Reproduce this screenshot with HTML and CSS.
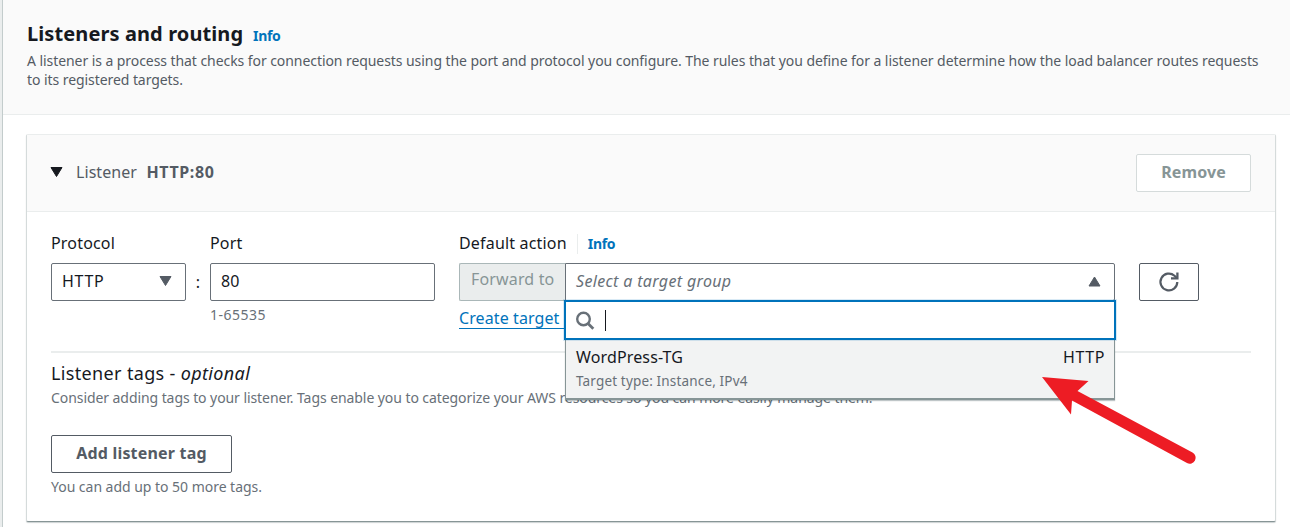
FILE: index.html
```html
<!DOCTYPE html>
<html lang="en">
<head>
<meta charset="utf-8">
<title>Listeners and routing</title>
<link rel="stylesheet" href="styles.css">
</head>
<body>
<main class="panel">
  <header class="panel-header">
    <div class="title-row"><h2 class="title">Listeners and routing</h2><a class="info">Info</a></div>
    <p class="description">A listener is a process that checks for connection requests using the port and protocol you configure. The rules that you define for a listener determine how the load balancer routes requests<br>to its registered targets.</p>
  </header>
  <section class="card">
    <div class="card-header">
      <svg class="caret" width="13" height="10" viewBox="0 0 13 10"><path d="M1 0.5H12L6.5 9.5Z" fill="#16191f" stroke="#16191f" stroke-linejoin="round"/></svg>
      <span class="listener-label">Listener</span>
      <strong class="listener-name">HTTP:80</strong>
      <button class="button remove">Remove</button>
    </div>
    <div class="card-body">
      <div class="fields">
        <div class="field protocol">
          <label class="label">Protocol</label>
          <div class="control"><span class="scheme">HTTP</span><svg width="13" height="10" viewBox="0 0 13 10"><path d="M1 0.5H12L6.5 9.5Z" fill="#545b64" stroke="#545b64" stroke-linejoin="round"/></svg></div>
        </div>
        <span class="colon">:</span>
        <div class="field port">
          <label class="label">Port</label>
          <div class="control"><span>80</span></div>
          <span class="hint">1-65535</span>
        </div>
        <div class="field action">
          <div class="label action-label"><span>Default action</span><a class="info action-info">Info</a></div>
          <div class="action-row">
            <div class="prefix">Forward to</div>
            <div class="target">
              <div class="control target-control"><em class="placeholder">Select a target group</em><svg width="13" height="11" viewBox="0 0 13 11"><path d="M1 10H12L6.5 1Z" fill="#545b64" stroke="#545b64" stroke-linejoin="round"/></svg></div>
              <div class="dropdown">
                <div class="search">
                  <svg width="20" height="20" viewBox="0 0 20 20" fill="none" stroke="#687078" stroke-width="2.4"><circle cx="7.500" cy="8" r="6.300"/><path d="M12 12.500L17.300 17.800" stroke-width="2.800"/></svg>
                  <i class="cursor"></i>
                </div>
                <div class="option">
                  <div class="option-row"><span class="option-name">WordPress-TG</span><span class="option-scheme">HTTP</span></div>
                  <span class="option-sub">Target type: Instance, IPv4</span>
                </div>
              </div>
            </div>
            <button class="button refresh" aria-label="Refresh"><svg width="22" height="22" viewBox="0 0 22 22" fill="none" stroke="#545b64" stroke-width="2.2"><path d="M19.300 11A8.400 8.400 0 1 1 16.500 4.700L18.800 7"/><path d="M19.400 1.500V7.400H13" stroke-width="2.300"/></svg></button>
          </div>
          <a class="create">Create target group</a>
        </div>
      </div>
      <section class="tags">
        <h3 class="tags-title">Listener tags - <em>optional</em></h3>
        <p class="tags-desc">Consider adding tags to your listener. Tags enable you to categorize your AWS resources so you can more easily manage them.</p>
        <button class="button add">Add listener tag</button>
        <p class="tags-note">You can add up to 50 more tags.</p>
      </section>
    </div>
  </section>
</main>
<svg class="arrow" width="160" height="94" viewBox="0 0 160 94"><path d="M3 3L49.5 7L38.500 17L153.500 78.500A5.800 5.800 0 0 1 148 89L33 26.500L32 40.500Z" fill="#ed1c24"/></svg>
</body>
</html>
```
FILE: styles.css
```css
* { box-sizing: border-box; }
body {
  margin: 0;
  width: 1290px;
  height: 527px;
  overflow: hidden;
  position: relative;
  background: #eaeded;
  color: #16191f;
  font: 16px/22px "Noto Sans", "Open Sans", sans-serif;
}
h2, h3, p { margin: 0; font-weight: 400; }
.panel { margin-left: 2px; height: 527px; border-left: 1px solid #c3cccc; background: #fff; }
.panel-header { height: 115px; padding: 21px 0 0 24px; background: #fafafa; border-bottom: 1px solid #eaeded; }
.title-row { display: flex; align-items: baseline; gap: 10px; height: 30px; white-space: nowrap; }
.title { font-size: 20px; line-height: 26px; font-weight: 700; width: 216px; letter-spacing: 0.1px; }
.info { color: #0073bb; font-size: 14px; font-weight: 700; letter-spacing: -0.3px; }
.description { font-size: 14px; line-height: 19px; color: #545b64; white-space: nowrap; letter-spacing: -0.068px; }
.card { margin: 19px 14px 0 23px; height: 388px; border: 1px solid #d5dbdb; border-top-color: #eaeded; border-bottom: 1px solid #879596; border-radius: 2px; background: #fff; box-shadow: 0 1px 1px rgba(0, 28, 36, .2); }
.card-header { display: flex; align-items: center; height: 77px; padding: 0 24px 0 23px; background: #fafafa; border-bottom: 1px solid #eaeded; color: #545b64; }
.caret { margin-bottom: 2px; }
.listener-label { margin-left: 13px; width: 70.5px; padding-bottom: 2px; white-space: nowrap; letter-spacing: 0.06px; }
.listener-name { padding-bottom: 2px; letter-spacing: 0.6px; }
.button { display: flex; align-items: center; justify-content: center; height: 38px; padding: 0; border: 1px solid #545b64; border-radius: 2px; background: #fff; color: #545b64; font: 700 16px/22px "Noto Sans", "Open Sans", sans-serif; white-space: nowrap; }
.remove { margin-left: auto; width: 115px; padding-bottom: 2px; border-color: #d5dbdb; color: #879596; letter-spacing: 0.1px; }
.card-body { padding: 20px 24px 0; }
.fields { display: flex; height: 121px; border-bottom: 2px solid #eaeded; }
.label { display: block; height: 31px; white-space: nowrap; letter-spacing: 0.18px; }
.control { display: flex; align-items: center; justify-content: space-between; height: 38px; padding: 0 13px 2px 10px; border: 1px solid #687078; border-radius: 2px; background: #fff; white-space: nowrap; }
.protocol { width: 135px; }
.scheme { letter-spacing: 0.7px; }
.colon { width: 24px; padding-top: 39px; text-align: center; }
.port { width: 225px; margin-right: 24px; }
.hint { display: block; margin-top: 4px; font-size: 14px; line-height: 20px; color: #687078; letter-spacing: 0.5px; }
.action { width: 740px; }
.action-label { display: flex; }
.action-info { margin-left: 10px; padding-left: 10px; height: 20px; border-left: 1px solid #eaeded; margin-top: 2px; line-height: 20px; }
.action-row { display: flex; }
.prefix { width: 106px; height: 38px; padding: 4px 0 0 11px; border: 1px solid #aab7b8; border-right: 0; border-radius: 2px 0 0 2px; background: #eaeded; color: #879596; white-space: nowrap; letter-spacing: 0.15px; }
.target { position: relative; width: 550px; }
.target-control { color: #687078; border-radius: 0 2px 2px 0; }
.placeholder { letter-spacing: 0.34px; }
.dropdown { position: absolute; top: 37px; left: 0; width: 550px; height: 100px; background: #f2f3f3; border: 1px solid #879596; border-bottom-width: 2px; box-shadow: 0 1px 1px rgba(0, 28, 36, .25); }
.search { display: flex; align-items: center; height: 40px; margin: -1px -2px 0; padding-left: 10px; border: 2px solid #0073bb; background: #fff; box-shadow: 0 0 0 1px rgba(0, 115, 187, .15); }
.search svg { margin-top: 1px; }
.cursor { width: 1px; height: 21px; margin-left: 9px; background: #16191f; }
.option { padding: 6px 9px 0 10px; }
.option-row { display: flex; justify-content: space-between; }
.option-name { letter-spacing: 0.14px; }
.option-scheme { letter-spacing: 0.6px; }
.option-sub { display: block; margin-top: 3px; font-size: 13.5px; line-height: 20px; color: #687078; letter-spacing: 0.16px; }
.refresh { width: 60px; margin-left: 24px; }
.create { display: inline-block; margin-top: 6px; height: 22px; border-bottom: 1px solid #0073bb; color: #0073bb; line-height: 22px; white-space: nowrap; letter-spacing: 0.1px; }
.tags-title { padding-top: 8px; font-size: 18px; line-height: 24px; letter-spacing: 0.35px; }
.tags-desc { margin-top: 3px; font-size: 14px; line-height: 20px; color: #687078; white-space: nowrap; letter-spacing: -0.073px; }
.add { width: 181px; margin-top: 27px; padding-bottom: 2px; letter-spacing: 0.2px; }
.tags-note { margin-top: 4px; font-size: 14px; line-height: 20px; color: #687078; letter-spacing: -0.03px; }
.arrow { position: absolute; left: 1039px; top: 374px; }
```
